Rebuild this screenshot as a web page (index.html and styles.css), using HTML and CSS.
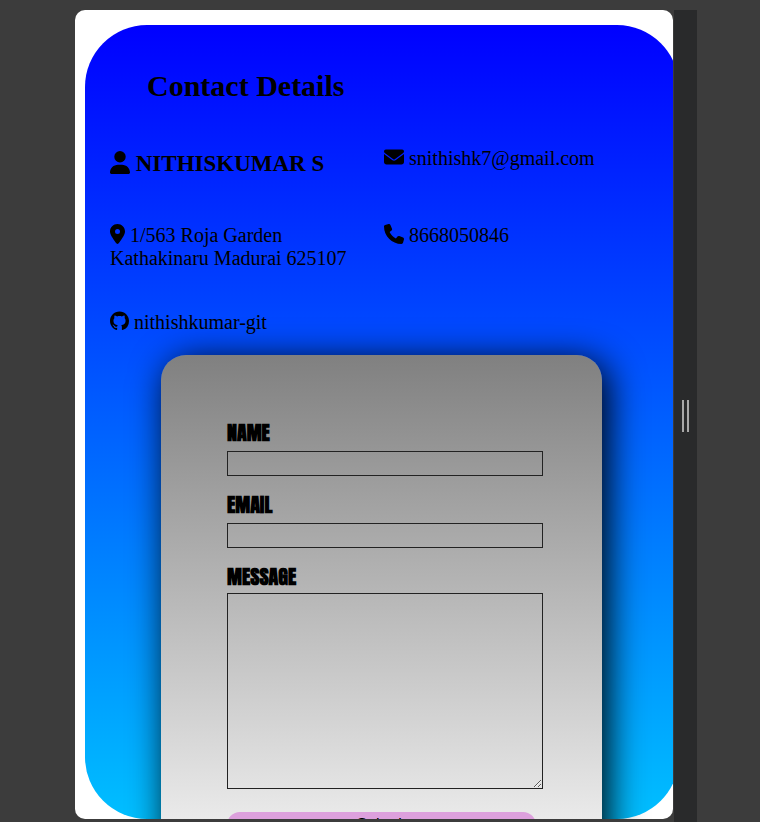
FILE: index.html
```html
<!DOCTYPE html>
<html lang="en">
<head>
<meta charset="utf-8">
<title>Contact Details</title>
<link rel="stylesheet" href="styles.css">
</head>
<body>
<div class="stage">
  <main class="screen">
    <section class="card">
      <h1 class="title">Contact Details</h1>
      <div class="details">
        <h2 class="name"><svg class="icon icon-user" viewBox="0 0 448 512" aria-hidden="true"><path d="M224 256A128 128 0 1 0 224 0a128 128 0 1 0 0 256zm-45.700 48C79.800 304 0 383.800 0 482.300C0 498.700 13.300 512 29.700 512H418.300c16.400 0 29.700-13.300 29.700-29.700C448 383.800 368.200 304 269.700 304H178.300z"/></svg> NITHISKUMAR S</h2>
        <p class="item"><svg class="icon icon-wide" viewBox="0 0 512 512" aria-hidden="true"><path d="M48 64C21.500 64 0 85.500 0 112c0 15.100 7.100 29.300 19.200 38.400L236.800 313.600c11.400 8.500 27 8.500 38.400 0L492.800 150.400c12.100-9.100 19.200-23.300 19.200-38.400c0-26.500-21.500-48-48-48H48zM0 176V384c0 35.300 28.700 64 64 64H448c35.300 0 64-28.700 64-64V176L294.400 339.200c-22.800 17.100-54 17.100-76.800 0L0 176z"/></svg> snithishk7@gmail.com</p>
        <p class="item"><svg class="icon icon-pin" viewBox="0 0 384 512" aria-hidden="true"><path d="M215.700 499.200C267 435 384 279.400 384 192C384 86 298 0 192 0S0 86 0 192c0 87.400 117 243 168.300 307.200c12.300 15.300 35.100 15.300 47.400 0zM192 128a64 64 0 1 1 0 128 64 64 0 1 1 0-128z"/></svg> 1/563 Roja Garden<br>Kathakinaru Madurai 625107</p>
        <p class="item"><svg class="icon icon-wide" viewBox="0 0 512 512" aria-hidden="true"><path d="M164.900 24.600c-7.700-18.600-28-28.500-47.400-23.200l-88 24C12.100 30.200 0 46 0 64C0 311.400 200.600 512 448 512c18 0 33.800-12.100 38.600-29.500l24-88c5.300-19.400-4.600-39.700-23.200-47.400l-96-40c-16.300-6.800-35.200-2.100-46.300 11.600L304.700 368C234.300 334.700 177.300 277.700 144 207.300L193.300 167c13.700-11.200 18.400-30 11.600-46.300l-40-96z"/></svg> 8668050846</p>
        <p class="item"><svg class="icon icon-git" viewBox="0 0 16 16" aria-hidden="true"><path d="M8 0C3.580 0 0 3.580 0 8c0 3.540 2.290 6.530 5.470 7.590.4.070.55-.17.55-.38 0-.19-.01-.82-.01-1.490-2.010.37-2.530-.49-2.690-.94-.09-.23-.48-.94-.82-1.130-.28-.15-.68-.52-.01-.53.63-.01 1.080.58 1.230.82.72 1.210 1.870.87 2.330.66.070-.52.280-.87.510-1.070-1.780-.2-3.640-.89-3.640-3.950 0-.87.310-1.590.820-2.150-.080-.2-.360-1.020.080-2.120 0 0 .670-.210 2.200.820.640-.180 1.320-.270 2-.270s1.360.090 2 .270c1.530-1.040 2.200-.820 2.200-.820.440 1.100.160 1.920.080 2.120.510.560.820 1.270.820 2.150 0 3.070-1.870 3.750-3.650 3.950.290.250.540.730.540 1.480 0 1.070-.010 1.930-.010 2.200 0 .210.150.460.550.380A8.010 8.010 0 0 0 16 8c0-4.420-3.580-8-8-8z"/></svg> nithishkumar-git</p>
      </div>
      <form class="form">
        <label class="label" for="name">NAME</label>
        <input class="field" id="name" type="text">
        <label class="label" for="email">EMAIL</label>
        <input class="field" id="email" type="email">
        <label class="label" for="message">MESSAGE</label>
        <textarea class="field message" id="message"></textarea>
        <button class="submit" type="submit">Submit</button>
      </form>
    </section>
  </main>
  <div class="handle"><span class="bar"></span><span class="bar"></span></div>
</div>
</body>
</html>
```
FILE: styles.css
```css
body {
  margin: 0;
  background: #3c3c3c;
  color: #000;
  font-family: "Liberation Serif", "Times New Roman", serif;
}

.stage {
  display: flex;
  gap: 1px;
  height: 100vh;
  box-sizing: border-box;
  padding: 10px 63px 0 75px;
  overflow: hidden;
}

.screen {
  flex: 1;
  min-width: 0;
  box-sizing: border-box;
  margin-bottom: 3px;
  padding: 15px 0 0 10px;
  border-radius: 10px;
  background: #fff;
  overflow: hidden;
}

.card {
  box-sizing: border-box;
  height: 100%;
  margin-right: -6px;
  padding: 43px 25px 0;
  border-radius: 62px;
  background: linear-gradient(#00f, #00bfff);
}

.title {
  margin: 0 0 46px 37px;
  font-size: 30px;
  line-height: 36px;
}

.details {
  display: grid;
  grid-template-columns: 1fr 1fr;
  column-gap: 4px;
  row-gap: 44px;
  font-size: 20px;
  line-height: 23px;
}

.name {
  margin: 0 0 5px;
  font-size: 23px;
  line-height: 28px;
}

.item {
  margin: -3px 0 0;
}

.icon {
  display: inline-block;
  height: 20px;
  vertical-align: -2px;
}

.icon-user {
  width: 20px;
  height: 23px;
  vertical-align: -3px;
}

.icon-wide {
  width: 20px;
}

.icon-pin {
  width: 15px;
}

.icon-git {
  width: 19px;
}

.form {
  box-sizing: border-box;
  width: 81%;
  min-height: 556px;
  margin: 21px auto 0 51px;
  padding: 65px 66px 0;
  border-radius: 25px;
  background: linear-gradient(#808080, #fff);
  box-shadow: 6px 6px 36px #000;
}

.label {
  display: block;
  font: bold 20px/26px Impact, Anton, "Liberation Sans", sans-serif;
}

.field {
  display: block;
  box-sizing: border-box;
  width: calc(100% + 7px);
  height: 25px;
  margin: 5px 0 16px;
  padding: 2px;
  border: 1px solid #222;
  background: transparent;
}

.message {
  height: 196px;
  margin: 3px 0 23px;
}

.submit {
  display: block;
  width: 100%;
  height: 26px;
  padding: 0;
  border: 0;
  border-radius: 15px;
  background: #dda0dd;
  font: 16px/24px "Liberation Sans", Arial, sans-serif;
}

.handle {
  display: flex;
  align-items: center;
  justify-content: center;
  gap: 3px;
  width: 23px;
  background: #292a2b;
}

.bar {
  width: 2px;
  height: 32px;
  background: #a8a8a8;
}
```
